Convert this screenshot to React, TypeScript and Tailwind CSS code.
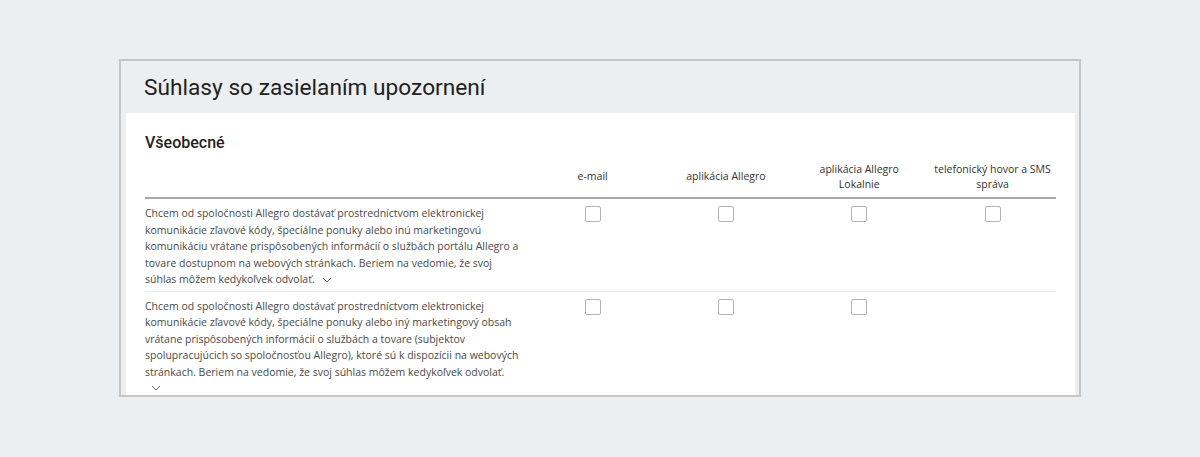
import React from 'react';

const channels = ['e-mail', 'aplikácia Allegro', 'aplikácia Allegro Lokalnie', 'telefonický hovor a SMS správa'];

const consents = [
    {
        text: (
            <>
                Chcem od spoločnosti Allegro dostávať prostredníctvom elektronickej komunikácie zľavové kódy, špeciálne
                ponuky alebo inú marketingovú komunikáciu vrátane prispôsobených informácií o službách portálu Allegro a
                tovare dostupnom na webových stránkach. Beriem na vedomie, že svoj{' '}
                <span className="whitespace-nowrap">súhlas môžem</span> kedykoľvek odvolať.
            </>
        ),
        boxes: [true, true, true, true],
        chevronBlock: false,
    },
    {
        text: (
            <>
                Chcem od spoločnosti Allegro dostávať prostredníctvom elektronickej komunikácie zľavové kódy, špeciálne
                ponuky alebo iný marketingový obsah vrátane prispôsobených informácií o službách a tovare (subjektov
                spolupracujúcich so spoločnosťou Allegro), ktoré sú k dispozícii na webových stránkach. Beriem na vedomie,
                že svoj súhlas môžem kedykoľvek odvolať.
            </>
        ),
        boxes: [true, true, true, false],
        chevronBlock: true,
    },
];

// malá šípka na rozbalenie textu
const Chevron = () => (
    <svg width="10" height="6" viewBox="0 0 10 6" className="inline-block align-middle" fill="none">
        <path d="M1 1l4 4 4-4" stroke="#666" strokeWidth="1" />
    </svg>
);

const Checkbox = () => (
    <span className="block w-[16px] h-[16px] border border-[#b3b3b3] rounded-[2px] bg-white" />
);

const App = () => {
    return (
        <div className="min-h-screen bg-[#eceff1] pt-[59px] pl-[119px]">
            <div className="w-[962px] h-[338px] border-2 border-[#c6c6c6] overflow-hidden flex flex-col">
                {/* hlavička panelu */}
                <div className="h-[52px] shrink-0 flex items-center pl-[23px]">
                    <h1 className="text-[22.7px] leading-none text-[#222] font-['Roboto',sans-serif] pt-[2px]">
                        Súhlasy so zasielaním upozornení
                    </h1>
                </div>

                <div className="ml-[5px] w-[949px] flex-1 bg-white px-[19px] pt-[19px]">
                    <h2 className="text-[16px] leading-[22px] font-medium text-[#222] font-['Roboto',sans-serif]">
                        Všeobecné
                    </h2>

                    <div className="font-['Open_Sans',sans-serif] text-[10.5px] text-[#4a4a4a]">
                        {/* záhlavie tabuľky */}
                        <div className="flex items-center h-[43px] border-b-2 border-[#a8a8a8] mt-[2px]">
                            <div className="w-[381px] shrink-0" />
                            {channels.map((ch, i) => (
                                <div key={i} className="w-[133.3px] shrink-0 px-[7px] text-center leading-[15px] text-[#333]">
                                    {ch}
                                </div>
                            ))}
                        </div>

                        {consents.map((row, i) => (
                            <div
                                key={i}
                                className={'flex pt-[6px] ' + (i === 0 ? 'pb-[3px] border-b border-[#ececec]' : 'pb-[5px]')}
                            >
                                <div className="w-[381px] shrink-0 pr-[1px] leading-[16.5px]">
                                    {row.text}
                                    {row.chevronBlock ? (
                                        <div className="pl-[6px] leading-[14px]">
                                            <Chevron />
                                        </div>
                                    ) : (
                                        <span className="ml-[7px]">
                                            <Chevron />
                                        </span>
                                    )}
                                </div>
                                {row.boxes.map((b, j) => (
                                    <div key={j} className="w-[133.3px] shrink-0 flex justify-center pt-[1px]">
                                        {b && <Checkbox />}
                                    </div>
                                ))}
                            </div>
                        ))}
                    </div>
                </div>
            </div>
        </div>
    );
};

export default App;
